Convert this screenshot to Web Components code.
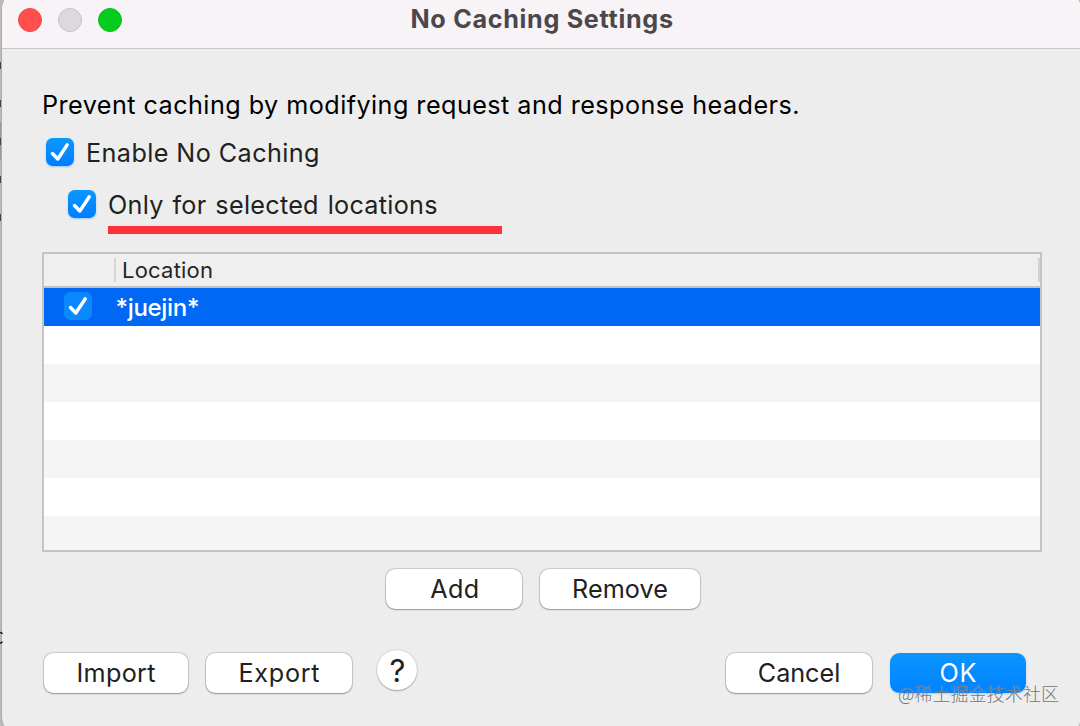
<!DOCTYPE html>
<html lang="en">
<head>
<meta charset="utf-8">
<title>No Caching Settings</title>
<style>
html,body{margin:0;height:100%;overflow:hidden;background:#bcbcbc;font-family:Inter,"Noto Sans CJK SC",sans-serif}
</style>
</head>
<body>
<settings-window></settings-window>
<script>
const define = (name, html, init) => {
  const tpl = document.createElement('template');
  tpl.innerHTML = html;
  customElements.define(name, class extends HTMLElement {
    constructor() {
      super();
      this.attachShadow({ mode: 'open' }).append(tpl.content.cloneNode(true));
    }
    connectedCallback() { if (init) init(this, this.shadowRoot); }
  });
};

// One line of text, tracked so that it fills the given width.
define('tracked-text', `<style>:host{display:block;white-space:nowrap;flex:none}span{display:inline-block}</style><span><slot></slot></span>`, (el, root) => {
  const span = root.querySelector('span');
  const target = parseFloat(el.getAttribute('width'));
  const n = el.textContent.length;
  span.style.letterSpacing = '0px';
  const w = span.getBoundingClientRect().width;
  if (!w) return;
  span.style.letterSpacing = ((target - w) / (n - 1)) + 'px';
  el.style.width = target + 'px';
});

define('check-box', `
<style>
:host{display:block;flex:none;width:28px;height:28px;border-radius:6.5px;background:linear-gradient(#0a98ff,#007dff);box-shadow:0 1px 2px #0080ff55}
:host([selected]){background:linear-gradient(#0c88ff,#0a8aff);box-shadow:none}
svg{display:block}
</style>
<svg width="28" height="28" viewBox="0 0 28 28" fill="none" stroke="#fff" stroke-width="3.5" stroke-linecap="round" stroke-linejoin="round"><path d="M6.5 15.6 11.8 21 21.2 6.9"/></svg>`);

define('traffic-lights', `
<style>
:host{display:flex;gap:16px}
i{width:24px;height:24px;border-radius:50%;box-sizing:border-box;border:1px solid #f0494a;background:#ff4f4d}
i:nth-of-type(2){background:#ddd8dc;border-color:#c6c1c5}
i:nth-of-type(3){background:#05cc1d;border-color:#09bf1b}
</style><i></i><i></i><i></i>`);

define('push-button', `
<style>
:host{display:flex;flex:none;align-items:center;justify-content:center;height:40px;border-radius:9.5px;background:#fff;color:#212121;font-size:25.2px;line-height:40px;box-shadow:0 0 1px 0.5px #00000026,0 1px 1.5px #00000040}
:host([primary]){background:linear-gradient(#0b95ff,#0082ff);color:#fff;box-shadow:0 1px 2px #0080ff44}
:host([round]){box-sizing:border-box;width:40px;padding:1px 0 0 1px;border-radius:50%;font-size:31px;font-weight:400}
</style><slot></slot>`);

define('location-table', `
<style>
:host{display:flex;flex-direction:column;box-sizing:border-box;width:1000px;height:300px;border:2px solid #c3c5c4;overflow:hidden;background:#fff}
header{display:flex;align-items:center;height:32px;border-bottom:2px solid #c0c1c1;background:#efefef;font-size:22px;line-height:32px;color:#262626}
header i{width:2px;height:24px;background:#d8d8d8;margin-left:70px;margin-right:6px}
header b{width:2px;height:24px;background:#d2d2d2;margin-left:auto}
.row{display:flex;align-items:center;flex:none;height:38px;background:#fff}
.row:nth-of-type(2n+3){background:#f5f5f5}
.row.selected{background:#0068f5;color:#fff;font-size:24px;font-weight:500;line-height:38px}
.row check-box{margin:-2px 23.5px 0 20px}
.row tracked-text{margin-top:2px}
</style>
<header><i></i><tracked-text width="91">Location</tracked-text><b></b></header>
<div class="row selected"><check-box selected></check-box><tracked-text width="84">*juejin*</tracked-text></div>
<div class="row"></div><div class="row"></div><div class="row"></div><div class="row"></div><div class="row"></div><div class="row"></div>`);

define('settings-window', `
<style>
:host{display:block;position:relative;width:1080px;height:726px;overflow:hidden;background:#bbb}
.behind{position:absolute;left:0;top:0}
.win{position:relative;box-sizing:border-box;margin:-12px -2px -12px 1px;height:750px;border:1px solid #adadad;border-radius:22px;background:#ededed;overflow:hidden;display:flex;flex-direction:column}
.bar{display:flex;align-items:center;box-sizing:border-box;height:60px;padding:2px 0 0 16px;flex:none;border-bottom:1px solid #c8c7c8;background:#f8f3f7}
.bar tracked-text{margin:-2px 0 0 288.5px;font-size:25.2px;font-weight:700;line-height:30px;color:#4c474b}
main{display:flex;flex-direction:column;width:1000px;padding:40px 0 0 40px;font-size:25.2px;color:#212121}
.intro{height:32px;line-height:32px;color:#000}
.opt{display:flex;align-items:center;height:32px;line-height:32px;gap:12px}
.opt check-box{margin-top:-2px}
.one{margin:16px 0 0 4px}
.two{margin:20px 0 0 26px;word-spacing:1.5px}
.mark{width:394px;height:8px;background:#fb3338;margin:5px 0 18px 66px}
.edit{display:flex;justify-content:center;gap:18px;margin-top:17px;padding-left:2px}
.end{display:flex;gap:18px;margin-top:44px;padding:0 16px 0 2px}
.end [round]{margin:-3px auto 0 7px}
.nudge{padding-left:1.5px}
.wm{position:absolute;left:898px;top:681px;font:300 18px/24px "Noto Sans CJK SC",sans-serif;color:#70757a;text-shadow:0 0 1px #ffffff80}
</style>
<svg class="behind" width="3" height="726"><path d="M0 122h1v38H0z" fill="#999"/><path d="M0 62h1.5v7H0zM0 100h1.5v7H0zM0 138h1.5v7H0zM0 176h1.5v7H0zM0 214h1.5v7H0z" fill="#444"/></svg>
<div class="win">
<div class="bar"><traffic-lights></traffic-lights><tracked-text width="262.5">No Caching Settings</tracked-text></div>
<main>
<div class="intro"><tracked-text width="757.5">Prevent caching by modifying request and response headers.</tracked-text></div>
<div class="opt one"><check-box></check-box><tracked-text width="233.5">Enable No Caching</tracked-text></div>
<div class="opt two"><check-box></check-box><tracked-text width="329.5">Only for selected locations</tracked-text></div>
<div class="mark"></div>
<location-table></location-table>
<div class="edit"><push-button style="width:136px"><tracked-text class="nudge" width="49">Add</tracked-text></push-button><push-button style="width:160px"><tracked-text width="96">Remove</tracked-text></push-button></div>
<div class="end"><push-button style="width:144px"><tracked-text width="79">Import</tracked-text></push-button><push-button style="width:146px"><tracked-text width="81">Export</tracked-text></push-button><push-button round>?</push-button><push-button style="width:146px"><tracked-text width="82.5">Cancel</tracked-text></push-button><push-button primary style="width:136px"><tracked-text width="37">OK</tracked-text></push-button></div>
</main>
</div>
<svg class="behind" width="3" height="726"><path d="M0 632.5q2 0 2 1.5M0 643q2 0 2-1.5" stroke="#222" stroke-width="1.6" fill="none"/></svg>
<div class="wm"><tracked-text width="161">@稀土掘金技术社区</tracked-text></div>`);
</script>
</body>
</html>
